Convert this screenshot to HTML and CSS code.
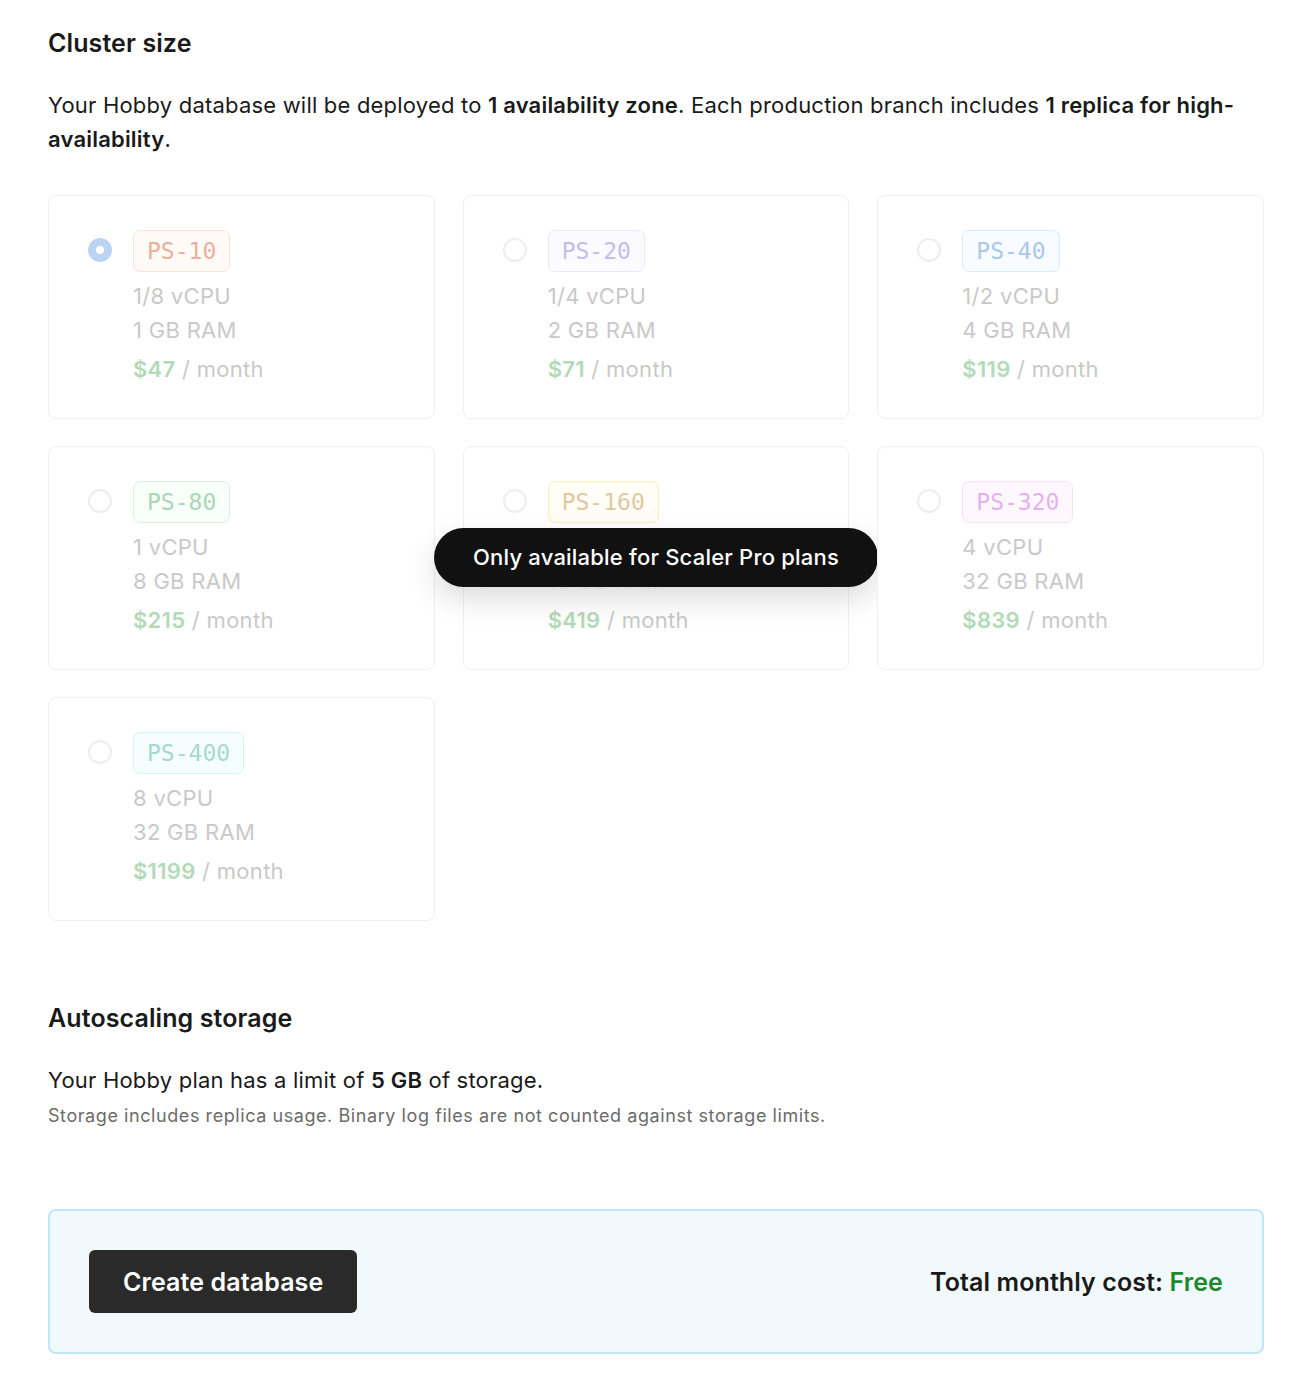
FILE: index.html
```html
<!DOCTYPE html>
<html lang="en">
<head>
  <meta charset="UTF-8" />
  <meta name="viewport" content="width=device-width, initial-scale=1.0" />
  <title>New database - Cluster size</title>
  <link rel="stylesheet" href="styles.css">
</head>
<body>

  <main class="page">
    <section class="section">
      <h2>Cluster size</h2>
      <p class="lead">Your Hobby database will be deployed to <strong>1 availability zone</strong>. Each production branch includes <strong>1 replica for high-availability</strong>.</p>

      <div class="plans">
        <label class="plan">
          <span class="radio checked"></span>
          <div class="plan-info">
            <span class="badge orange">PS-10</span>
            <div class="spec">1/8 vCPU</div>
            <div class="spec">1 GB RAM</div>
            <div class="price"><b>$47</b> / month</div>
          </div>
        </label>
        <label class="plan">
          <span class="radio"></span>
          <div class="plan-info">
            <span class="badge purple">PS-20</span>
            <div class="spec">1/4 vCPU</div>
            <div class="spec">2 GB RAM</div>
            <div class="price"><b>$71</b> / month</div>
          </div>
        </label>
        <label class="plan">
          <span class="radio"></span>
          <div class="plan-info">
            <span class="badge blue">PS-40</span>
            <div class="spec">1/2 vCPU</div>
            <div class="spec">4 GB RAM</div>
            <div class="price"><b>$119</b> / month</div>
          </div>
        </label>
        <label class="plan">
          <span class="radio"></span>
          <div class="plan-info">
            <span class="badge green">PS-80</span>
            <div class="spec">1 vCPU</div>
            <div class="spec">8 GB RAM</div>
            <div class="price"><b>$215</b> / month</div>
          </div>
        </label>
        <label class="plan has-tooltip">
          <span class="radio"></span>
          <div class="plan-info">
            <span class="badge yellow">PS-160</span>
            <div class="spec">2 vCPU</div>
            <div class="spec">16 GB RAM</div>
            <div class="price"><b>$419</b> / month</div>
          </div>
          <div class="tooltip">Only available for Scaler Pro plans</div>
        </label>
        <label class="plan">
          <span class="radio"></span>
          <div class="plan-info">
            <span class="badge pink">PS-320</span>
            <div class="spec">4 vCPU</div>
            <div class="spec">32 GB RAM</div>
            <div class="price"><b>$839</b> / month</div>
          </div>
        </label>
        <label class="plan">
          <span class="radio"></span>
          <div class="plan-info">
            <span class="badge teal">PS-400</span>
            <div class="spec">8 vCPU</div>
            <div class="spec">32 GB RAM</div>
            <div class="price"><b>$1199</b> / month</div>
          </div>
        </label>
      </div>
    </section>

    <section class="section storage">
      <h2>Autoscaling storage</h2>
      <p class="lead">Your Hobby plan has a limit of <strong>5 GB</strong> of storage.</p>
      <p class="note">Storage includes replica usage. Binary log files are not counted against storage limits.</p>
    </section>

    <div class="summary">
      <button class="create-btn">Create database</button>
      <div class="total">Total monthly cost: <span class="free">Free</span></div>
    </div>
  </main>

</body>
</html>
```

FILE: styles.css
```css
body {
  font-family: Inter, "Noto Sans", sans-serif;
  background-color: #ffffff;
  margin: 0;
  color: #1a1a1a;
}
.page {
  padding: 26px 39px 40px 48px;
}
h2 {
  margin: 0;
  font-size: 25px;
  line-height: 34px;
  font-weight: 600;
  letter-spacing: 0.1px;
}
.lead {
  margin: 28px 0 0;
  font-size: 22px;
  line-height: 34px;
  letter-spacing: 0.2px;
}
.lead strong {
  font-weight: 600;
}
.plans {
  display: grid;
  grid-template-columns: repeat(3, 1fr);
  gap: 27px 28px;
  margin-top: 39px;
}
.plan {
  position: relative;
  display: flex;
  align-items: flex-start;
  gap: 21px;
  height: 224px;
  box-sizing: border-box;
  padding: 33px 40px 0 39px;
  border: 1px solid #f0f0f0;
  border-radius: 8px;
  background-color: #ffffff;
}
.radio {
  flex: none;
  width: 24px;
  height: 24px;
  margin-top: 9px;
  box-sizing: border-box;
  border: 2px solid #eeeeee;
  border-radius: 50%;
}
.radio.checked {
  border: 8px solid #bad4f2;
  background-color: #ffffff;
}
.plan-info {
  display: flex;
  flex-direction: column;
  align-items: flex-start;
  font-size: 22px;
  line-height: 34px;
  letter-spacing: 0.3px;
  color: #c9c9c9;
}
.has-tooltip .spec {
  color: #f4f4f4;
}
.badge {
  font-family: "DejaVu Sans Mono", "Liberation Mono", monospace;
  font-size: 23px;
  line-height: 40px;
  letter-spacing: 0;
  padding: 0 13px;
  border: 1px solid;
  border-radius: 7px;
  margin: 1px 0 7px;
}
.badge.orange { background-color: #fffaf7; border-color: #fde3d5; color: #e8b09a; }
.badge.purple { background-color: #fbfaff; border-color: #ece8fb; color: #c5bde8; }
.badge.blue { background-color: #f8fbff; border-color: #dbeafd; color: #a8c8ee; }
.badge.green { background-color: #f8fef9; border-color: #daf3df; color: #a9d8b3; }
.badge.yellow { background-color: #fffdf5; border-color: #fdeebb; color: #dfc9a0; }
.badge.pink { background-color: #fef8fe; border-color: #f8e0f8; color: #e5b0ec; }
.badge.teal { background-color: #f5fefd; border-color: #d5f5ef; color: #a5d9d0; }
.price {
  margin-top: 5px;
}
.price b {
  color: #b3dab8;
  font-weight: 600;
}
.tooltip {
  position: absolute;
  top: 81px;
  left: 50%;
  transform: translateX(-50%);
  white-space: nowrap;
  background-color: #111111;
  color: #ffffff;
  font-size: 22px;
  line-height: 59px;
  letter-spacing: 0.2px;
  padding: 0 39px;
  border-radius: 30px;
  box-shadow: 0 12px 30px rgba(0, 0, 0, 0.14);
  font-weight: 500;
}
.storage {
  margin-top: 80px;
}
.storage .lead {
  margin-top: 28px;
}
.note {
  margin: 5px 0 0;
  font-size: 18px;
  line-height: 28px;
  letter-spacing: 0.57px;
  color: #6b6b6b;
}
.summary {
  display: flex;
  align-items: center;
  justify-content: space-between;
  margin-top: 79px;
  height: 145px;
  box-sizing: border-box;
  padding: 0 39px;
  background-color: #f2f9fd;
  border: 2px solid #bfe6fb;
  border-radius: 8px;
}
.create-btn {
  font-family: inherit;
  font-size: 25px;
  font-weight: 600;
  letter-spacing: 0.1px;
  color: #ffffff;
  background-color: #2a2a2a;
  border: none;
  border-radius: 6px;
  height: 63px;
  padding: 0 34px;
  cursor: pointer;
}
.total {
  font-size: 25px;
  font-weight: 600;
  letter-spacing: 0.1px;
}
.free {
  color: #1b8a2e;
}
```
